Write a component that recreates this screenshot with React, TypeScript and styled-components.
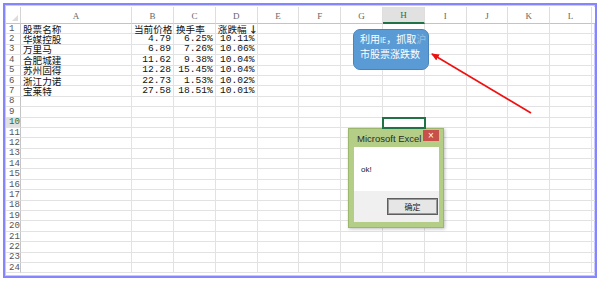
import React from 'react';
import styled, { createGlobalStyle } from 'styled-components';

const GlobalStyle = createGlobalStyle`
  html, body {
    margin: 0;
    padding: 0;
    background: #fff;
  }
`;

const COLS = ['A', 'B', 'C', 'D', 'E', 'F', 'G', 'H', 'I', 'J', 'K', 'L'];
const ROW_COUNT = 24;
const SELECTED_COL = 'H';
const SELECTED_ROW = 10;

const STOCKS: [string, string, string, string][] = [
  ['华媒控股', '4.79', '6.25%', '10.11%'],
  ['万里马', '6.89', '7.26%', '10.06%'],
  ['合肥城建', '11.62', '9.38%', '10.04%'],
  ['苏州固得', '12.28', '15.45%', '10.04%'],
  ['浙江力诺', '22.73', '1.53%', '10.02%'],
  ['宝莱特', '27.58', '18.51%', '10.01%'],
];

type CellValue = { text: React.ReactNode; num?: boolean };

const buildData = (): Record<string, CellValue> => {
  const data: Record<string, CellValue> = {
    A1: { text: '股票名称' },
    B1: { text: '当前价格' },
    C1: { text: '换手率' },
    D1: {
      text: (
        <>
          涨跌幅<SortArrow>↓</SortArrow>
        </>
      ),
    },
  };
  STOCKS.forEach(([name, price, turn, change], i) => {
    const r = i + 2;
    data[`A${r}`] = { text: name };
    data[`B${r}`] = { text: price, num: true };
    data[`C${r}`] = { text: turn, num: true };
    data[`D${r}`] = { text: change, num: true };
  });
  return data;
};

const App: React.FC = () => {
  const data = buildData();
  const rows = Array.from({ length: ROW_COUNT }, (_, i) => i + 1);

  return (
    <Page>
      <GlobalStyle />
      <Frame>
        <Sheet>
          <Corner>
            <CornerMark />
          </Corner>
          {COLS.map((c) => (
            <ColHead key={c} $active={c === SELECTED_COL}>
              {c}
            </ColHead>
          ))}
          <ColHead />
          {rows.map((r) => (
            <React.Fragment key={r}>
              <RowHead $active={r === SELECTED_ROW}>{r}</RowHead>
              {COLS.map((c) => {
                const cell = data[`${c}${r}`];
                return (
                  <Cell
                    key={c}
                    $num={!!cell?.num}
                    $selected={c === SELECTED_COL && r === SELECTED_ROW}
                  >
                    {cell?.text}
                  </Cell>
                );
              })}
              <Cell />
            </React.Fragment>
          ))}
        </Sheet>
      </Frame>

      <Callout>
        利用<Small>IE</Small>，抓取<Faded>沪</Faded>
        <br />
        市股票涨跌数
      </Callout>

      <ArrowLayer width="600" height="281" viewBox="0 0 600 281">
        <defs>
          <marker
            id="head"
            markerWidth="8"
            markerHeight="8"
            refX="1"
            refY="4"
            orient="auto"
            markerUnits="userSpaceOnUse"
          >
            <path d="M0,4 L8,0.5 L8,7.5 Z" fill="#f01010" />
          </marker>
        </defs>
        <line
          x1="432"
          y1="54"
          x2="531"
          y2="113"
          stroke="#f01010"
          strokeWidth="1.6"
          markerStart="url(#head)"
        />
      </ArrowLayer>

      <Dialog>
        <TitleBar>
          <Title>Microsoft Excel</Title>
          <CloseButton>×</CloseButton>
        </TitleBar>
        <DialogBody>
          <Message>ok!</Message>
          <ButtonBar>
            <OkButton>确定</OkButton>
          </ButtonBar>
        </DialogBody>
      </Dialog>
    </Page>
  );
};

export default App;

const Page = styled.div`
  position: relative;
  width: 600px;
  height: 281px;
  overflow: hidden;
  background: #fff;
`;

const Frame = styled.div`
  box-sizing: border-box;
  margin: 3px 0 0 3px;
  width: 594px;
  height: 275px;
  border: 2px solid #8585ff;
  padding: 2px 0 0 1px;
  box-shadow: inset 0 0 0 1px #c9c9ff;
  overflow: hidden;
`;

const Sheet = styled.div`
  display: grid;
  grid-template-columns: 15px 111px 42px repeat(10, 41.8px) 1fr;
  grid-template-rows: 17px repeat(24, 10.4px);
  font-family: 'Noto Sans CJK SC', 'Liberation Sans', sans-serif;
  font-size: 10px;
  color: #111;
`;

const Corner = styled.div`
  position: relative;
  border-right: 1px solid #d4d4d4;
  border-bottom: 1px solid #c4c4c4;
`;

const CornerMark = styled.div`
  position: absolute;
  right: 2px;
  bottom: 2px;
  width: 0;
  height: 0;
  border-left: 6px solid transparent;
  border-bottom: 6px solid #dcdcdc;
`;

const ColHead = styled.div<{ $active?: boolean }>`
  box-sizing: border-box;
  display: flex;
  align-items: flex-end;
  justify-content: center;
  padding-bottom: 2px;
  font-family: 'Liberation Serif', serif;
  font-size: 9px;
  color: ${({ $active }) => ($active ? '#217346' : '#666')};
  background: ${({ $active }) => ($active ? '#e1e1e1' : '#fff')};
  border-right: 1px solid #dedede;
  border-bottom: ${({ $active }) =>
    $active ? '2px solid #217346' : '1px solid #c4c4c4'};
`;

const RowHead = styled.div<{ $active?: boolean }>`
  box-sizing: border-box;
  display: flex;
  align-items: center;
  padding-left: 3px;
  font-family: 'Liberation Mono', monospace;
  font-size: 9px;
  line-height: 10px;
  color: ${({ $active }) => ($active ? '#217346' : '#555')};
  background: ${({ $active }) => ($active ? '#e1e1e1' : '#fff')};
  border-right: 1px solid #c4c4c4;
  border-bottom: 1px solid #e2e2e2;
`;

const Cell = styled.div<{ $num?: boolean; $selected?: boolean }>`
  box-sizing: border-box;
  position: relative;
  display: flex;
  align-items: center;
  justify-content: ${({ $num }) => ($num ? 'flex-end' : 'flex-start')};
  padding: 0 2px;
  white-space: nowrap;
  line-height: 10px;
  font-family: ${({ $num }) =>
    $num
      ? "'Liberation Mono', 'Noto Sans CJK SC', monospace"
      : "'Noto Sans CJK SC', 'Liberation Sans', sans-serif"};
  font-size: 9.6px;
  border-right: 1px solid #e2e2e2;
  border-bottom: 1px solid #e2e2e2;
  outline: ${({ $selected }) => ($selected ? '2px solid #217346' : 'none')};
  outline-offset: -1px;
  z-index: ${({ $selected }) => ($selected ? 1 : 0)};
`;

const SortArrow = styled.span`
  font-weight: bold;
  margin-left: 2px;
  color: #222;
`;

const Callout = styled.div`
  position: absolute;
  left: 353px;
  top: 29px;
  box-sizing: border-box;
  width: 76px;
  height: 41px;
  padding: 2px 6px;
  border-radius: 7px;
  background: #5b9bd5;
  border: 1px solid #4a84bb;
  color: #fff;
  font-family: 'Noto Sans CJK SC', 'Liberation Sans', sans-serif;
  font-size: 10px;
  line-height: 14px;
  white-space: nowrap;
  overflow: hidden;
`;

const Small = styled.span`
  font-size: 7px;
`;

const Faded = styled.span`
  opacity: 0.35;
`;

const ArrowLayer = styled.svg`
  position: absolute;
  left: 0;
  top: 0;
  pointer-events: none;
`;

const Dialog = styled.div`
  position: absolute;
  left: 348px;
  top: 128px;
  box-sizing: border-box;
  width: 96px;
  height: 100px;
  padding: 0 4px 5px 5px;
  display: flex;
  flex-direction: column;
  background: #b5ce87;
  border: 1px solid #9bb76d;
  box-shadow: 1px 1px 3px rgba(0, 0, 0, 0.25);
`;

const TitleBar = styled.div`
  height: 18px;
  display: flex;
  align-items: flex-start;
  justify-content: space-between;
`;

const Title = styled.span`
  margin: 4px 0 0 3px;
  white-space: nowrap;
  font-family: 'Liberation Sans', sans-serif;
  font-size: 9.5px;
  line-height: 11px;
  color: #2b2b2b;
`;

const CloseButton = styled.span`
  flex: none;
  margin-top: 1px;
  width: 16px;
  height: 11px;
  display: flex;
  align-items: center;
  justify-content: center;
  background: #c7504a;
  color: #fff;
  font-family: 'Liberation Sans', sans-serif;
  font-size: 10px;
  line-height: 11px;
`;

const DialogBody = styled.div`
  flex: 1;
  display: flex;
  flex-direction: column;
  background: #fff;
`;

const Message = styled.div`
  flex: 1;
  display: flex;
  align-items: center;
  padding-left: 7px;
  font-family: 'Liberation Sans', sans-serif;
  font-size: 8px;
  color: #222;
`;

const ButtonBar = styled.div`
  height: 31px;
  display: flex;
  align-items: center;
  justify-content: flex-end;
  padding-right: 1px;
  background: #f0f0f0;
`;

const OkButton = styled.div`
  box-sizing: border-box;
  width: 51px;
  height: 17px;
  display: flex;
  align-items: center;
  justify-content: center;
  background: #e6e6e6;
  border: 1px solid #5e5e5e;
  box-shadow: inset 0 0 0 1px #9a9a9a;
  font-family: 'Noto Sans CJK SC', sans-serif;
  font-size: 8px;
  color: #222;
`;
